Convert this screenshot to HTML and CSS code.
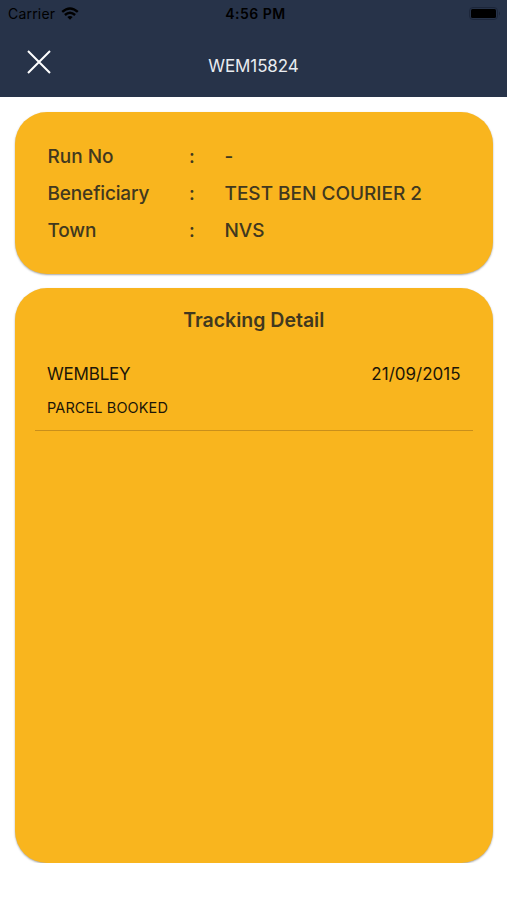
FILE: index.html
```html
<!DOCTYPE html>
<html lang="en">
<head>
<meta charset="utf-8">
<title>WEM15824</title>
<link rel="stylesheet" href="styles.css">
</head>
<body>
<header class="header">
  <div class="status">
    <div class="carrier"><span>Carrier</span>
      <svg class="wifi" viewBox="0 0 18 13" width="18" height="13"><g fill="none" stroke="#000" stroke-width="2.4"><path d="M1.2 4.9Q9-2 16.8 4.9"/><path d="M3.9 8Q9 3.4 14.1 8"/></g><path d="M6.3 10Q9 7.8 11.7 10L9 12.8Z"/></svg>
    </div>
    <span class="time">4:56 PM</span>
    <svg class="battery" viewBox="0 0 32 14" width="32" height="14"><rect x=".5" y=".5" width="28" height="12" rx="3.5" fill="none" stroke="#1c263a"/><rect x="2" y="2" width="25" height="9" rx="1.5"/><path d="M30 4.5q2 2 0 4z" fill="#1c263a"/></svg>
  </div>
  <div class="nav">
    <svg class="close" viewBox="0 0 24 24" width="24" height="24"><path d="M1 1L23 23M23 1L1 23" stroke="#fff" stroke-width="2" fill="none"/></svg>
    <h1 class="title">WEM15824</h1>
  </div>
</header>
<main class="content">
  <section class="card summary">
    <span>Run No</span><span>:</span><span>-</span>
    <span class="label">Beneficiary</span><span>:</span><span>TEST BEN COURIER 2</span>
    <span class="label">Town</span><span>:</span><span>NVS</span>
  </section>
  <section class="card tracking">
    <h2 class="heading">Tracking Detail</h2>
    <div class="entry">
      <div class="row"><span class="place">WEMBLEY</span><span>21/09/2015</span></div>
      <div class="state">PARCEL BOOKED</div>
    </div>
  </section>
</main>
</body>
</html>
```

FILE: styles.css
```css
* { box-sizing: border-box; }
body { margin: 0; background: #fff; font-family: Inter, "Liberation Sans", sans-serif; color: #1c1608; }
.header { height: 97px; background: #273349; }
.status { display: grid; grid-template-columns: 1fr auto 1fr; align-items: center; height: 27px; padding: 0 6px 0 8px; color: #000; font-size: 14px; }
.carrier { display: flex; align-items: center; gap: 6px; letter-spacing: .2px; }
.time { padding-left: 2px; font-weight: 600; letter-spacing: .5px; }
.battery { justify-self: end; }
.nav { display: grid; grid-template-columns: 80px 1fr 80px; align-items: center; height: 69px; }
.close { margin-left: 27px; }
.title { margin: 8px 0 0; text-align: center; color: #e9ecf1; font-size: 17px; font-weight: 400; letter-spacing: -.1px; }
.content { padding: 15px 14.5px 0 15px; }
.card { background: #f9b51e; border-radius: 32px; box-shadow: 0 1px 2px rgba(0,0,0,.35); }
.summary { display: grid; grid-template-columns: 141.5px 35.5px 1fr; grid-auto-rows: 37px; align-items: center; height: 162px; padding: 26px 32.5px; color: #41381f; font-size: 19px; font-weight: 500; }
.label { letter-spacing: -.15px; }
.tracking { height: 575px; margin-top: 14px; padding: 20px 20px 0; }
.heading { margin: 0; text-align: center; line-height: 25px; font-size: 19.5px; font-weight: 600; color: #41381f; }
.entry { height: 98px; border-bottom: 1px solid #c98f1b; padding: 29px 12px 0; }
.row { display: flex; justify-content: space-between; line-height: 24px; font-size: 17px; }
.place { letter-spacing: -.2px; }
.state { margin-top: 12px; line-height: 20px; font-size: 14.5px; letter-spacing: .1px; }
```
